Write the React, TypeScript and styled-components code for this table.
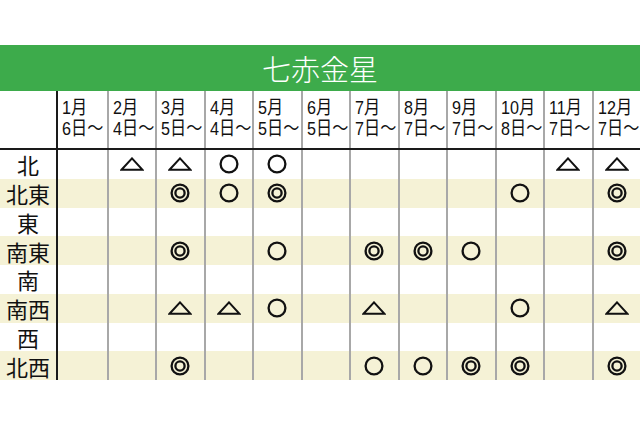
import React from "react"
import styled, { createGlobalStyle } from "styled-components"

type Mark = "" | "tri" | "o" | "oo"

const GlobalStyle = createGlobalStyle`
  html, body {
    margin: 0;
    padding: 0;
    background: #ffffff;
    overflow: hidden;
  }
  body {
    font-family: "Liberation Sans", "Noto Sans CJK JP", sans-serif;
    color: #111;
  }
`

const Page = styled.div`
  width: 640px;
  padding-top: 45px;
`

const TitleBar = styled.div`
  height: 46px;
  background: #3dab4b;
  color: #ffffff;
  display: flex;
  align-items: center;
  justify-content: center;
  font-family: "Noto Sans CJK JP", sans-serif;
  font-size: 29px;
  font-weight: 300;
`

const GridRow = styled.div<{ $shade?: boolean; $head?: boolean }>`
  display: grid;
  grid-template-columns: 58px repeat(12, minmax(0, 1fr));
  height: ${(p) => (p.$head ? "59px" : "28.75px")};
  background: ${(p) => (p.$shade ? "#f5f2d6" : "#ffffff")};
  border-bottom: ${(p) => (p.$head ? "2px solid #1a1a1a" : "0")};
  box-sizing: border-box;
`

const LabelCell = styled.div`
  border-right: 2px solid #1a1a1a;
  display: flex;
  align-items: center;
  justify-content: center;
  font-family: "Noto Sans CJK JP", sans-serif;
  font-size: 22px;
  line-height: 1;
  color: #111;
`

const MonthCell = styled.div<{ $first?: boolean }>`
  border-left: ${(p) => (p.$first ? "0" : "2px solid #a8a8a8")};
  box-sizing: border-box;
  padding: 6px 0 0 4px;
  min-width: 0;
`

const MonthText = styled.div`
  font-family: "Liberation Sans", "Noto Sans CJK JP", sans-serif;
  font-size: 19px;
  line-height: 21px;
  white-space: nowrap;
  transform: scaleX(0.85);
  transform-origin: left top;
  color: #111;
`

const DataCell = styled.div<{ $first?: boolean }>`
  border-left: ${(p) => (p.$first ? "0" : "2px solid #a8a8a8")};
  box-sizing: border-box;
  display: flex;
  align-items: center;
  justify-content: center;
`

const months = [
  ["1月", "6日～"],
  ["2月", "4日～"],
  ["3月", "5日～"],
  ["4月", "4日～"],
  ["5月", "5日～"],
  ["6月", "5日～"],
  ["7月", "7日～"],
  ["8月", "7日～"],
  ["9月", "7日～"],
  ["10月", "8日～"],
  ["11月", "7日～"],
  ["12月", "7日～"],
]

const _ = ""
const rows: { label: string; marks: Mark[] }[] = [
  { label: "北", marks: [_, "tri", "tri", "o", "o", _, _, _, _, _, "tri", "tri"] },
  { label: "北東", marks: [_, _, "oo", "o", "oo", _, _, _, _, "o", _, "oo"] },
  { label: "東", marks: [_, _, _, _, _, _, _, _, _, _, _, _] },
  { label: "南東", marks: [_, _, "oo", _, "o", _, "oo", "oo", "o", _, _, "oo"] },
  { label: "南", marks: [_, _, _, _, _, _, _, _, _, _, _, _] },
  { label: "南西", marks: [_, _, "tri", "tri", "o", _, "tri", _, _, "o", _, "tri"] },
  { label: "西", marks: [_, _, _, _, _, _, _, _, _, _, _, _] },
  { label: "北西", marks: [_, _, "oo", _, _, _, "o", "o", "oo", "oo", _, "oo"] },
]

const Symbol = ({ kind }: { kind: Mark }) => {
  if (kind === "tri") {
    return (
      <svg width="24" height="14" viewBox="0 0 24 14">
        <polygon
          points="1.5,12.8 12,1.4 22.5,12.8"
          fill="none"
          stroke="#111"
          strokeWidth="2"
          strokeLinejoin="miter"
        />
      </svg>
    )
  }
  if (kind === "o") {
    return (
      <svg width="22" height="22" viewBox="0 0 22 22">
        <circle cx="11" cy="11" r="8.4" fill="none" stroke="#111" strokeWidth="2.3" />
      </svg>
    )
  }
  if (kind === "oo") {
    return (
      <svg width="22" height="22" viewBox="0 0 22 22">
        <circle cx="11" cy="11" r="8.4" fill="none" stroke="#111" strokeWidth="2.3" />
        <circle cx="11" cy="11" r="4.6" fill="none" stroke="#111" strokeWidth="2.3" />
      </svg>
    )
  }
  return null
}

const App = () => {
  return (
    <Page>
      <GlobalStyle />
      <TitleBar>七赤金星</TitleBar>
      <GridRow $head>
        <LabelCell />
        {months.map(([m, d], i) => (
          <MonthCell key={m} $first={i === 0}>
            <MonthText>{m}</MonthText>
            <MonthText>{d}</MonthText>
          </MonthCell>
        ))}
      </GridRow>
      {rows.map((row, r) => (
        <GridRow key={row.label} $shade={r % 2 === 1}>
          <LabelCell>{row.label}</LabelCell>
          {row.marks.map((mark, c) => (
            <DataCell key={c} $first={c === 0}>
              <Symbol kind={mark} />
            </DataCell>
          ))}
        </GridRow>
      ))}
    </Page>
  )
}

export default App
